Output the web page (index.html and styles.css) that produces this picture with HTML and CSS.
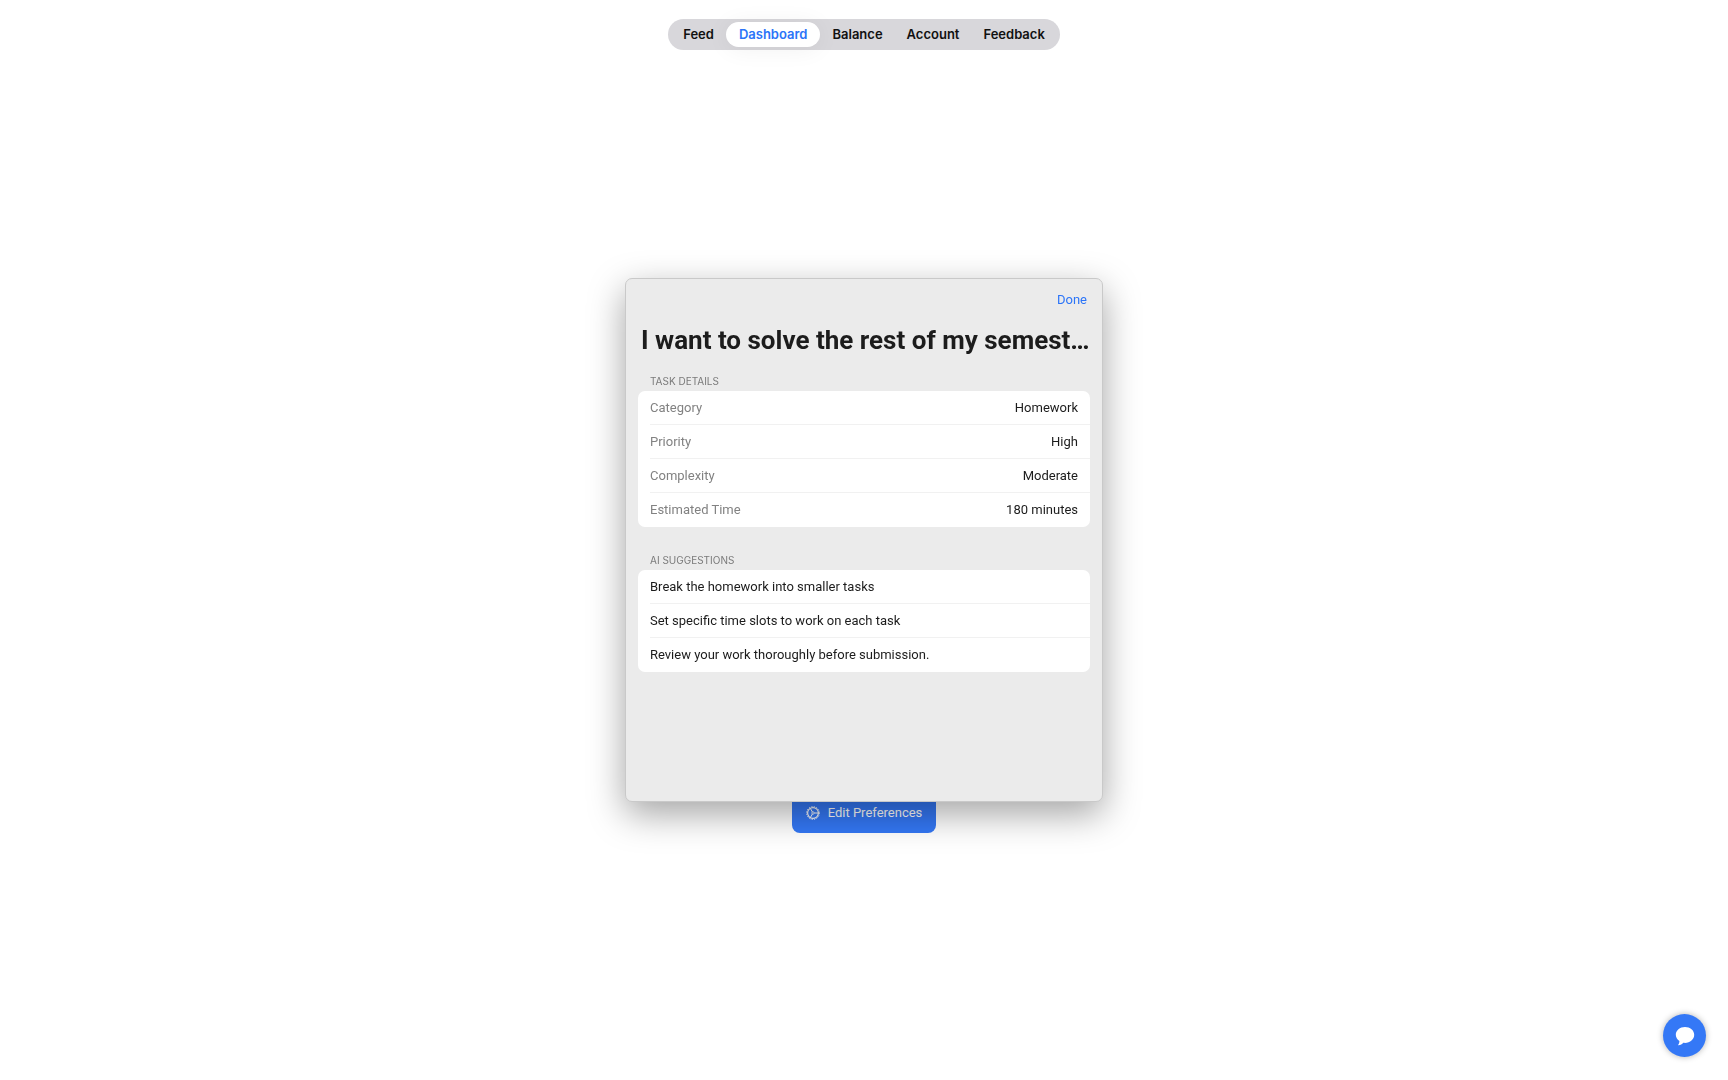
FILE: index.html
```html
<!DOCTYPE html>
<html lang="en">
<head>
    <meta charset="UTF-8">
    <meta name="viewport" content="width=device-width, initial-scale=1.0">
    <title>Dashboard</title>
    <link rel="stylesheet" href="styles.css">
</head>
<body>
    <header class="topbar">
        <nav class="tabs">
            <a href="#feed">Feed</a>
            <a href="#dashboard" class="active" aria-current="page">Dashboard</a>
            <a href="#balance">Balance</a>
            <a href="#account">Account</a>
            <a href="#feedback">Feedback</a>
        </nav>
    </header>

    <main class="dashboard">
        <button type="button" class="preferences">
            <svg class="gear" viewBox="0 0 14 14" fill="none" stroke="currentColor">
                <circle cx="7" cy="7" r="5.4" stroke-width="1.2"/>
                <circle cx="7" cy="7" r="6.4" stroke-width="1" stroke-dasharray="1.2 1.313"/>
                <circle cx="7" cy="7" r="1.2" stroke-width="0.8"/>
                <path d="M8.2 7H12.4M6.4 6L4.3 2.3M6.4 8L4.3 11.7" stroke-width="1"/>
            </svg>
            Edit Preferences
        </button>
    </main>

    <div class="overlay">
        <section class="sheet" role="dialog" aria-labelledby="task-title">
            <div class="sheet-bar">
                <button type="button" class="done">Done</button>
            </div>
            <h1 id="task-title">I want to solve the rest of my semest…</h1>

            <h2>TASK DETAILS</h2>
            <dl class="group">
                <div class="row">
                    <dt>Category</dt>
                    <dd>Homework</dd>
                </div>
                <div class="row">
                    <dt>Priority</dt>
                    <dd>High</dd>
                </div>
                <div class="row">
                    <dt>Complexity</dt>
                    <dd>Moderate</dd>
                </div>
                <div class="row">
                    <dt>Estimated Time</dt>
                    <dd>180 minutes</dd>
                </div>
            </dl>

            <h2>AI SUGGESTIONS</h2>
            <ul class="group">
                <li class="row">Break the homework into smaller tasks</li>
                <li class="row">Set specific time slots to work on each task</li>
                <li class="row">Review your work thoroughly before submission.</li>
            </ul>
        </section>
    </div>

    <button type="button" class="chat" aria-label="Open chat">
        <svg viewBox="0 0 20 20" fill="currentColor">
            <path d="M10 1C4.9 1 .8 4.4.8 8.8c0 2.6 1.4 4.8 3.6 6.2.1 1.5-.4 2.7-1.2 3.7-.2.3 0 .6.4.6 1.9-.1 3.5-1.200 4.7-2.500.6.1 1.100.1 1.700.1 5.100 0 9.200-3.600 9.200-8.100S15.100 1 10 1z"/>
        </svg>
    </button>
</body>
</html>
```
FILE: styles.css
```css
* {
    box-sizing: border-box;
}

body {
    display: flex;
    flex-direction: column;
    min-height: 100vh;
    margin: 0;
    background-color: #fff;
    color: #1c1c1c;
    font-family: Roboto, "Liberation Sans", sans-serif;
    font-size: 13px;
    line-height: 16px;
}

button {
    border: none;
    font: inherit;
    cursor: pointer;
}

.topbar {
    display: flex;
    justify-content: center;
    padding-top: 19px;
}

.tabs {
    display: flex;
    padding: 3px;
    border-radius: 16px;
    background-color: #d8d7db;
    font-family: Inter, "Liberation Sans", sans-serif;
    font-weight: 600;
}

.tabs a {
    padding: 4px 12px 5px;
    border-radius: 13px;
    color: #111;
    text-decoration: none;
}

.tabs .active {
    padding: 4px 13px 5px;
    background-color: #fff;
    color: #2b74f8;
    box-shadow: 0 2px 24px rgba(0, 0, 0, 0.06);
}

.dashboard {
    flex: 1;
    display: flex;
    justify-content: center;
    align-items: flex-end;
    padding-bottom: 247px;
}

.preferences {
    display: flex;
    align-items: center;
    gap: 8px;
    height: 40px;
    padding: 0 14px;
    border-radius: 8px;
    background-color: #3478f6;
    color: #fff;
}

.gear {
    width: 14px;
    height: 14px;
}

.overlay {
    position: fixed;
    inset: 0;
    display: flex;
    justify-content: center;
    align-items: center;
}

.sheet {
    width: 478px;
    min-height: 524px;
    padding: 11px 12px;
    border: 1px solid #c9c9c9;
    border-radius: 7px;
    background-color: #ebebeb;
    box-shadow: 0 12px 36px rgba(0, 0, 0, 0.36);
}

.sheet-bar {
    display: flex;
    justify-content: flex-end;
}

.done {
    padding: 2px 3px;
    background: none;
    color: #2b74f8;
}

h1 {
    margin: 14px 0 17px;
    padding: 0 3px;
    font-size: 26px;
    line-height: 32px;
    white-space: nowrap;
}

h2 {
    margin: 0;
    padding: 0 12px;
    color: #7a7a7a;
    font-family: Inter, "Liberation Sans", sans-serif;
    font-size: 10px;
    font-weight: 400;
    line-height: 16px;
}

.group {
    margin: 2px 0 25px;
    padding: 0 0 0 12px;
    border-radius: 7px;
    background-color: #fff;
    list-style: none;
}

.row {
    display: flex;
    justify-content: space-between;
    align-items: center;
    height: 34px;
    padding-right: 12px;
    border-bottom: 1px solid #f1f1f1;
}

.row:last-child {
    border-bottom-color: transparent;
}

dt {
    color: #828282;
}

dd {
    margin: 0;
}

.chat {
    position: fixed;
    right: 22px;
    bottom: 23px;
    display: flex;
    justify-content: center;
    align-items: center;
    width: 43px;
    height: 43px;
    padding: 0;
    border-radius: 50%;
    background-color: #3478f6;
    color: #fff;
    box-shadow: 0 0 6px rgba(0, 0, 0, 0.3);
}

.chat svg {
    width: 20px;
    height: 20px;
}
```
